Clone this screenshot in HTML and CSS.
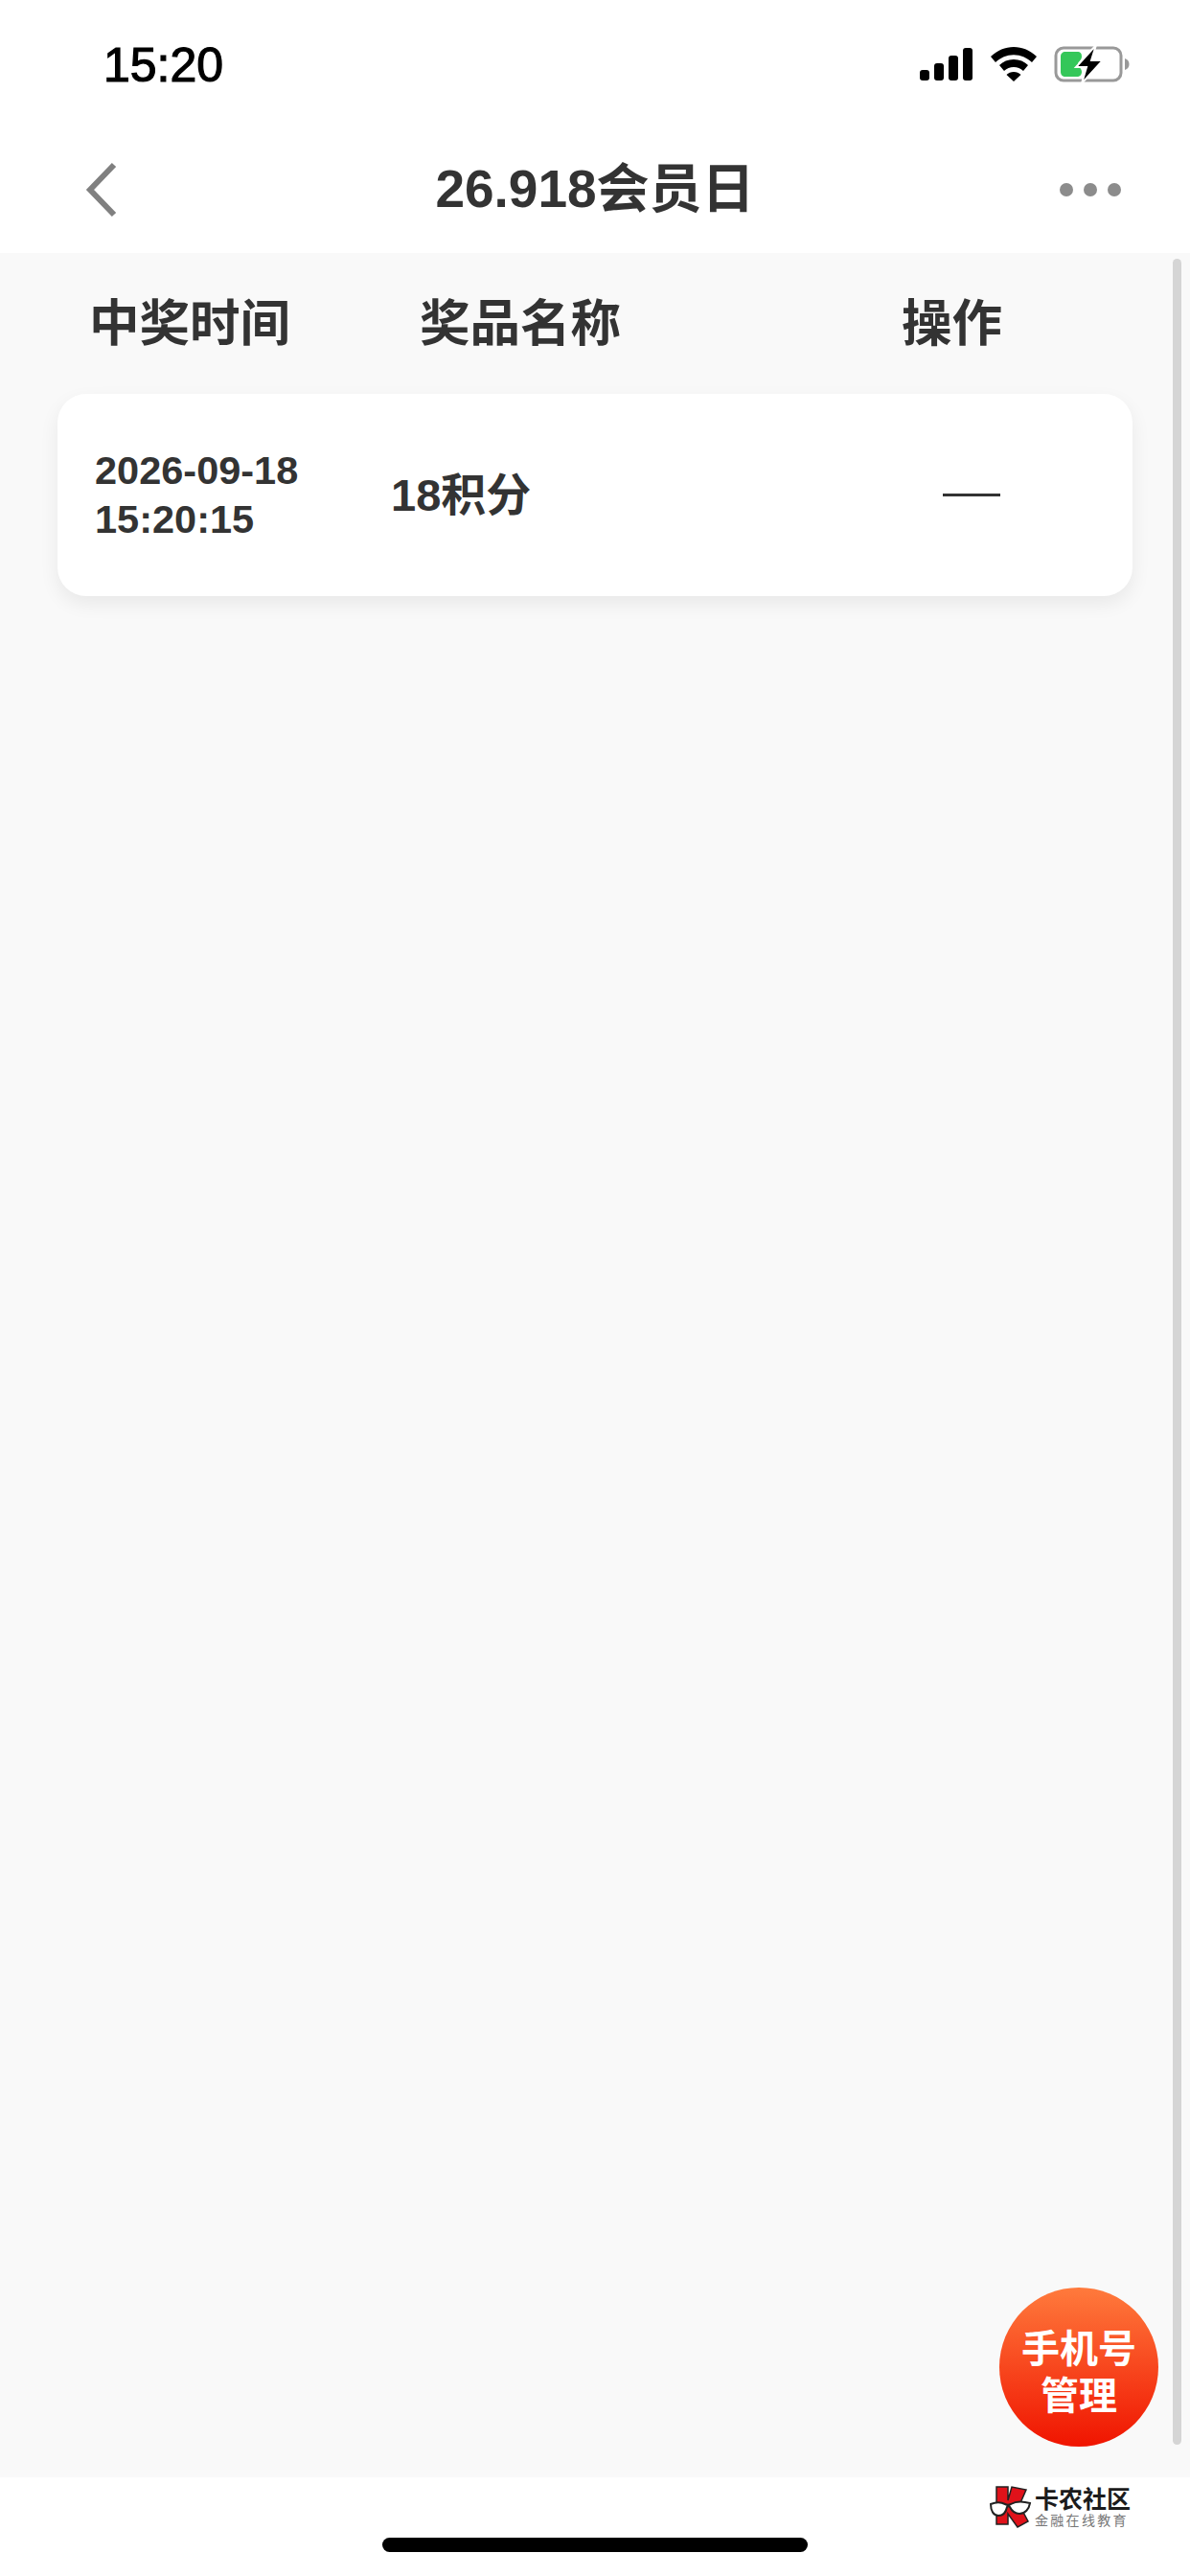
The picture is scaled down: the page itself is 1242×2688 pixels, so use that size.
FILE: index.html
```html
<!DOCTYPE html>
<html lang="zh-CN">
  <head>
    <meta charset="UTF-8" />
    <title>26.918会员日</title>
    <link rel="stylesheet" href="styles.css">
  </head>
  <body>
    <div class="phone">
      <div class="status-bar">
        <span class="time">15:20</span>
        <div class="status-icons">
          <svg class="signal" width="56" height="34" viewBox="0 0 56 34">
            <rect x="0" y="23" width="10" height="11" rx="3" />
            <rect x="15" y="16" width="10" height="18" rx="3" />
            <rect x="30" y="8" width="10" height="26" rx="3" />
            <rect x="45" y="0" width="10" height="34" rx="3" />
          </svg>
          <svg class="wifi" width="48" height="36" viewBox="0 0 48 36">
            <path d="M24 0C15 0 7 3.500 0 10l5 6c5.500-5 11.500-7.800 19-7.800S37.500 11 43 16l5-6C41 3.500 33 0 24 0z" />
            <path d="M24 13c-6 0-11 2.200-15 6l5 6c3-2.600 6-4 10-4s7 1.400 10 4l5-6c-4-3.800-9-6-15-6z" />
            <path d="M24 26c-3 0-5.500 1-7.500 3L24 36l7.500-7c-2-2-4.500-3-7.500-3z" />
          </svg>
          <svg class="battery" width="80" height="40" viewBox="0 0 80 40">
            <rect x="2" y="3" width="68" height="34" rx="8" fill="none" stroke="#999" stroke-width="3" />
            <path d="M74 14c3 1 4.500 3 4.500 6s-1.500 5-4.500 6z" fill="#999" />
            <path d="M12 7h12c4 0 5 2 5 5 0 4-4 5-4 8s4 4 4 8c0 3-2 5-5 5H12c-3 0-5-2-5-5V12c0-3 2-5 5-5z" fill="#34c759" />
            <path d="M44 0L23 23h11l-5 17 22-24H39z" fill="#000" stroke="#fff" stroke-width="2" />
          </svg>
        </div>
      </div>

      <div class="nav-bar">
        <svg class="back" width="34" height="58" viewBox="0 0 34 58">
          <path d="M31 3L6 29l25 26" fill="none" stroke="#808080" stroke-width="6" />
        </svg>
        <h1 class="title">26.918会员日</h1>
        <div class="more">
          <span class="dot"></span>
          <span class="dot"></span>
          <span class="dot"></span>
        </div>
      </div>

      <div class="content">
        <div class="table-head">
          <span class="head-time">中奖时间</span>
          <span class="head-name">奖品名称</span>
          <span class="head-action">操作</span>
        </div>
        <div class="record">
          <div class="record-time">2026-09-18<br />15:20:15</div>
          <div class="record-name">18积分</div>
          <div class="record-action"></div>
        </div>
        <div class="scroll-thumb"></div>
        <div class="fab"><span class="fab-label">手机号<br />管理</span></div>
      </div>

      <div class="footer">
        <div class="brand">
          <svg class="brand-mark" width="44" height="44" viewBox="0 0 44 44">
            <path d="M7 1h12v14L23 1l15 3-7 16 9 17-11 6-10-14v11H7z" fill="#e0121a" stroke="#222" stroke-width="1.500" />
            <path d="M1 19c5-2 11-2 15 0 2 1 4 1 6 0 5-3 13-3 20-1-1 6-5 11-11 11-5 0-8-3-10-7-1-1-2-1-3 0-1 5-4 9-9 9-5 0-8-5-8-12z" fill="#fff" stroke="#222" stroke-width="2" />
          </svg>
          <div class="brand-text">
            <span class="brand-name">卡农社区</span>
            <span class="brand-sub">金融在线教育</span>
          </div>
        </div>
        <div class="home-indicator"></div>
      </div>
    </div>
  </body>
</html>
```

FILE: styles.css
```css
html,
body {
  width: 1242px;
  height: 2688px;
  padding: 0;
  margin: 0;
  overflow: hidden;
  background-color: #fff;
  font-family: "Liberation Sans", "Noto Sans CJK SC", sans-serif;
  color: #333;
}

.phone {
  display: flex;
  flex-direction: column;
  height: 2688px;
}

.status-bar {
  height: 132px;
  display: flex;
  justify-content: space-between;
  align-items: flex-start;
  padding: 40px 62px 0 108px;
  box-sizing: border-box;
}

.time {
  font-size: 50px;
  line-height: 56px;
  font-weight: 500;
  color: #000;
  -webkit-text-stroke: 1.2px #000;
}

.status-icons {
  display: flex;
  align-items: center;
  gap: 18px;
  padding-top: 7px;
}

.signal,
.wifi {
  fill: #000;
}

.nav-bar {
  height: 132px;
  display: flex;
  align-items: center;
  justify-content: space-between;
  padding: 0 72px 0 88px;
  box-sizing: border-box;
}

.title {
  margin: 0 0 2px 14px;
  font-size: 55px;
  line-height: 64px;
  font-weight: 700;
}

.more {
  display: flex;
  gap: 11px;
}

.dot {
  width: 14px;
  height: 14px;
  border-radius: 50%;
  background-color: #8c8c8c;
}

.content {
  flex: 1;
  position: relative;
  background-color: #f9f9f9;
  padding: 0 60px;
}

.table-head {
  display: flex;
  height: 147px;
  align-items: center;
  font-size: 52.5px;
  font-weight: 700;
  box-sizing: border-box;
  padding-bottom: 10px;
}

.head-time {
  width: 378px;
  padding-left: 33px;
  box-sizing: border-box;
}

.head-name {
  width: 503px;
}

.record {
  height: 211px;
  display: flex;
  align-items: center;
  background-color: #fff;
  border-radius: 30px;
  box-shadow: 0 8px 20px rgba(0, 0, 0, 0.07);
}

.record-time {
  width: 348px;
  padding: 0 0 2px 39px;
  box-sizing: border-box;
  font-size: 41.5px;
  line-height: 51px;
  font-weight: 700;
}

.record-name {
  width: 576px;
  margin-bottom: 9px;
  font-size: 47px;
  font-weight: 700;
}

.record-action {
  width: 60px;
  height: 3px;
  background-color: #333;
}

.scroll-thumb {
  position: absolute;
  top: 6px;
  left: 1224px;
  width: 9px;
  height: 2281px;
  border-radius: 5px;
  background-color: #d5d5d5;
}

.fab {
  position: absolute;
  top: 2123px;
  left: 1043px;
  width: 166px;
  height: 166px;
  border-radius: 50%;
  display: flex;
  align-items: center;
  justify-content: center;
  text-align: center;
  font-size: 40px;
  line-height: 49px;
  font-weight: 700;
  color: #fff;
  background: linear-gradient(180deg, #ff7a3c 0%, #f01400 100%);
}

.fab-label {
  margin-top: 12px;
}

.footer {
  height: 103px;
  display: flex;
  flex-direction: column;
  align-items: center;
  background-color: #fff;
}

.brand {
  align-self: flex-end;
  display: flex;
  align-items: center;
  gap: 3px;
  margin: 9px 62px 0 0;
}

.brand-text {
  display: flex;
  flex-direction: column;
}

.brand-name {
  font-size: 25px;
  line-height: 28px;
  font-weight: 700;
  color: #1c1c1c;
}

.brand-sub {
  font-size: 14px;
  line-height: 16px;
  letter-spacing: 2.300px;
  color: #777;
}

.home-indicator {
  width: 444px;
  height: 15px;
  margin-top: 10px;
  border-radius: 8px;
  background-color: #000;
}
```
